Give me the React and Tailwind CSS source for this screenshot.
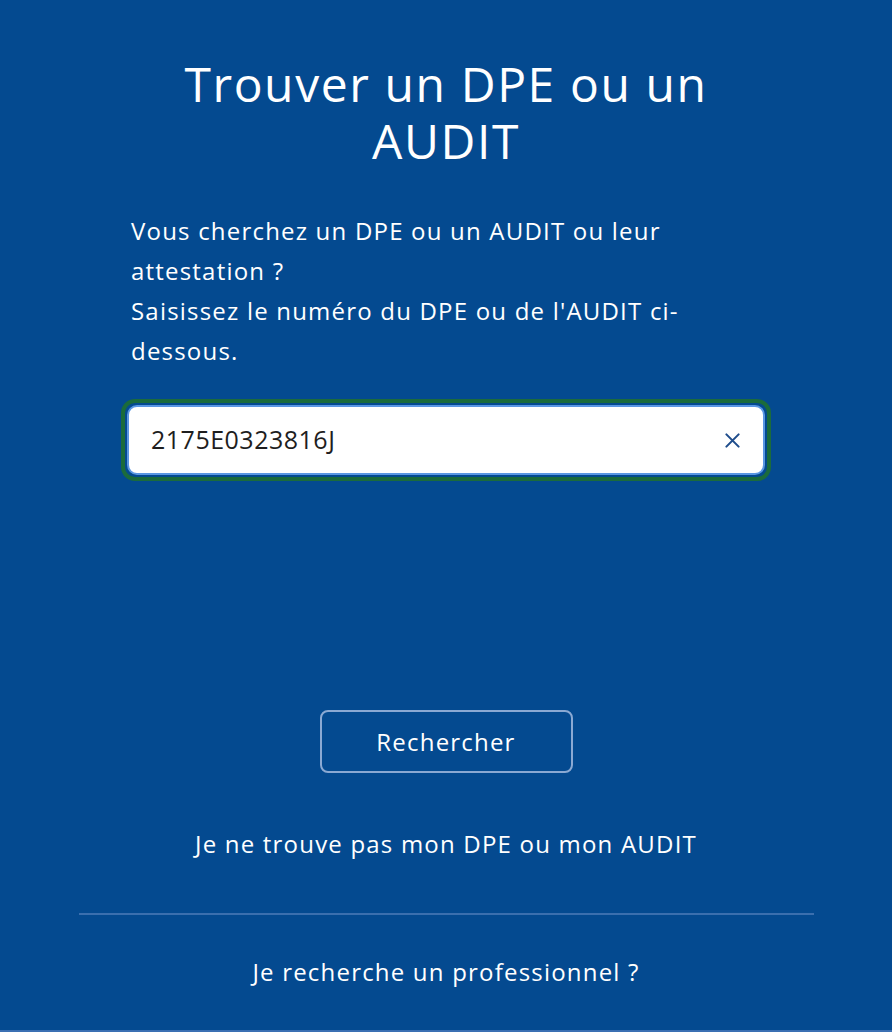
import React from "react";

export default function App() {
  return (
    <div
      className="min-h-[1032px] w-full bg-[#044a90] text-white flex flex-col items-center border-b-2 border-[#3b70b3]"
      style={{ fontFamily: '"Open Sans", "Noto Sans", sans-serif' }}
    >
      <div className="w-[632px] flex flex-col pt-[55px]">
        <h1 className="text-center text-[48px] leading-[57px] font-normal tracking-[1.6px]">
          Trouver un DPE ou un AUDIT
        </h1>
        <p className="mt-[42px] text-[24px] leading-[40px] pl-[1px] tracking-[1.2px]">
          Vous cherchez un DPE ou un AUDIT ou leur attestation ?
          <br />
          Saisissez le numéro du DPE ou de l'AUDIT ci-dessous.
        </p>
        <div className="mt-[28px] -ml-[9px] -mr-[9px] rounded-[14px] border-4 border-[#1b6b3c] p-[2px]">
          <div className="flex items-center h-[70px] rounded-[10px] border-2 border-[#5a97e3] bg-white pl-[22px] pr-[20px]">
            <span className="flex-1 text-[25px] tracking-[0.5px] text-[#1e1e1e]">2175E0323816J</span>
            <svg width="21" height="21" viewBox="0 0 24 24" fill="none" stroke="#1f4d8c" strokeWidth="2.4" strokeLinecap="round">
              <path d="M5 5L19 19M19 5L5 19" />
            </svg>
          </div>
        </div>
      </div>
      <button className="mt-[229px] w-[253px] h-[63px] rounded-[8px] border-2 border-[#8ba9d3] text-[24px] tracking-[1.2px] text-white">
        Rechercher
      </button>
      <div className="mt-[55px] text-[24px] leading-[32px] tracking-[1.2px]">Je ne trouve pas mon DPE ou mon AUDIT</div>
      <div className="mt-[53px] w-[735px] h-[2px] bg-[#3b6fae]" />
      <div className="mt-[41px] text-[24px] leading-[32px] tracking-[1.2px]">Je recherche un professionnel ?</div>
    </div>
  );
}
